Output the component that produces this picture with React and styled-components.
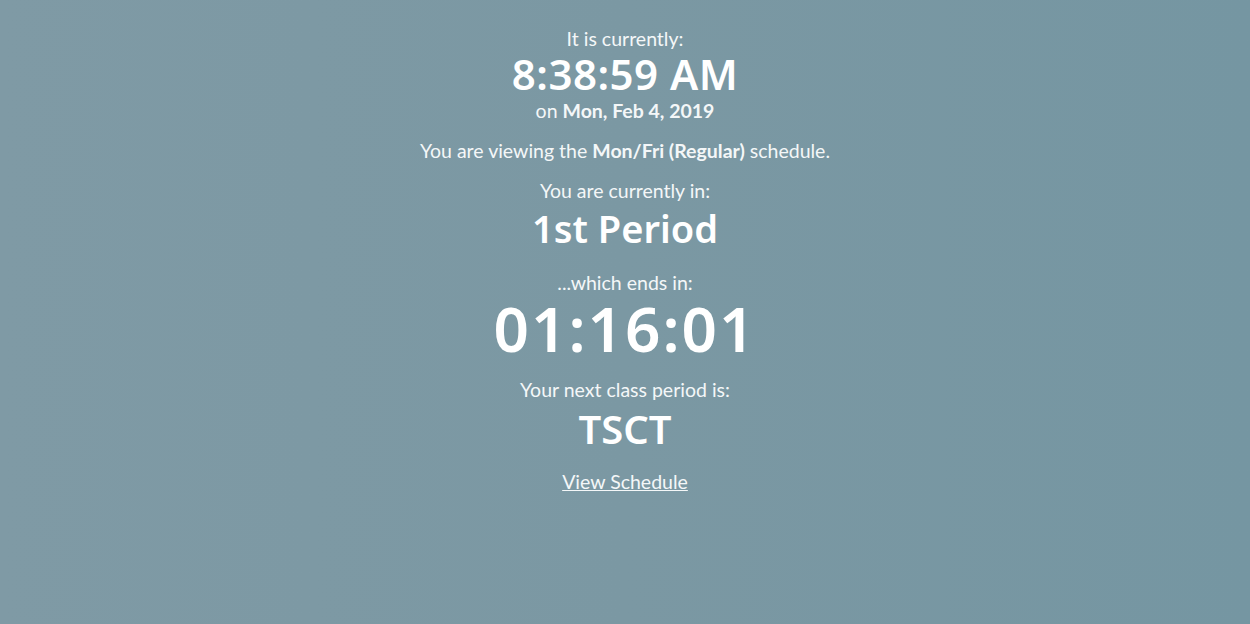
import React from 'react'
import styled, { createGlobalStyle } from 'styled-components'

const GlobalStyle = createGlobalStyle`
  html, body {
    margin: 0;
    height: 100%;
  }
  body {
    background: linear-gradient(to right, #7f9aa5 0%, #7b98a3 50%, #7596a2 100%);
    color: #fff;
    font-family: Lato, "Noto Sans", sans-serif;
  }
`

const Page = styled.main`
  display: flex;
  flex-direction: column;
  align-items: center;
  padding-top: 28px;
  text-align: center;
  min-height: 624px;
  box-sizing: border-box;
`

const Label = styled.div`
  font-size: 19.5px;
  line-height: 22px;
  margin-top: ${p => p.gap || 0}px;
  color: #f4f7f8;
`

const Big = styled.div`
  font-family: "Noto Sans", sans-serif;
  font-weight: 600;
  font-size: ${p => p.size}px;
  line-height: ${p => p.lh}px;
  letter-spacing: ${p => p.ls || 0}px;
  color: #fff;
`

const Link = styled.a`
  margin-top: 14px;
  font-size: 19.5px;
  line-height: 22px;
  color: #f4f7f8;
  text-decoration: underline;
  cursor: pointer;
`

export default function App() {
  return (
    <>
      <GlobalStyle />
      <Page>
        <Label>It is currently:</Label>
        <Big size={42} lh={48} ls={0.5}>8:38:59 AM</Big>
        <Label gap={2}>on <b>Mon, Feb 4, 2019</b></Label>
        <Label gap={18}>You are viewing the <b>Mon/Fri (Regular)</b> schedule.</Label>
        <Label gap={18}>You are currently in:</Label>
        <Big size={38} lh={52}>1st Period</Big>
        <Label gap={18}>...which ends in:</Label>
        <Big size={62} lh={68} ls={2}>01:16:01</Big>
        <Label gap={17}>Your next class period is:</Label>
        <Big size={40} lh={56}>TSCT</Big>
        <Link>View Schedule</Link>
      </Page>
    </>
  )
}
